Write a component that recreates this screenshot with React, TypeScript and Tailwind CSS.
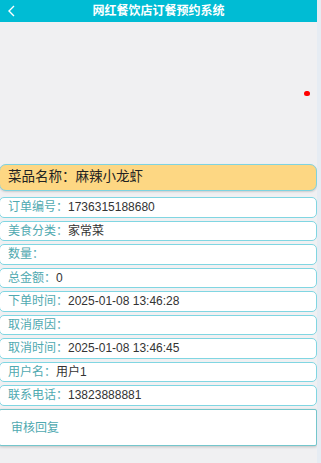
const font = { fontFamily: '"Liberation Sans", "Noto Sans CJK SC", sans-serif' };

type Row = { label: string; value: string };

const rows: Row[] = [
  { label: '订单编号：', value: '1736315188680' },
  { label: '美食分类：', value: '家常菜' },
  { label: '数量：', value: '' },
  { label: '总金额：', value: '0' },
  { label: '下单时间：', value: '2025-01-08 13:46:28' },
  { label: '取消原因：', value: '' },
  { label: '取消时间：', value: '2025-01-08 13:46:45' },
  { label: '用户名：', value: '用户1' },
  { label: '联系电话：', value: '13823888881' },
];

export default function App() {
  return (
    <div className="flex h-[463px] w-[321px] overflow-hidden bg-[#f0f0f2]" style={font}>
      <div className="flex w-[317px] flex-col">
        <div className="relative flex h-[22px] items-center justify-center bg-[#00bcd4]">
          <svg className="absolute left-[7px] top-[5px]" width="9" height="12" viewBox="0 0 9 12">
            <path d="M7 1 L2 6 L7 11" fill="none" stroke="#fff" strokeWidth="1.4" />
          </svg>
          <span className="text-[12px] font-bold text-white">网红餐饮店订餐预约系统</span>
        </div>

        <div className="relative h-[142px]">
          <div className="absolute left-[304px] top-[69px] h-[5px] w-[6px] rounded-full bg-[#ff0000]" />
        </div>

        <div className="-ml-[1px] flex h-[27px] items-center rounded-[7px] border border-[#7fd3e0] bg-[#fdd783] pl-[8px] text-[13.5px] text-[#222] shadow-[0_1px_2px_rgba(0,0,0,0.15)]">
          菜品名称：麻辣小龙虾
        </div>

        <div className="mt-[6px] flex flex-col gap-[3px]">
          {rows.map((r) => (
            <div
              key={r.label}
              className="-ml-[1px] flex h-[20.5px] items-center rounded-[5px] border border-[#80d6e2] bg-white pl-[8px] text-[12px]"
            >
              <span className="text-[#4fa9b0]">{r.label}</span>
              <span className="text-[#333]">{r.value}</span>
            </div>
          ))}
        </div>

        <div className="-ml-[1px] mt-[3.5px] flex h-[37px] items-center rounded-[2px] border border-[#74c6cc] bg-white pl-[11px] text-[12px] text-[#4fa9b0] shadow-[0_1px_3px_rgba(0,0,0,0.2)]">
          审核回复
        </div>
      </div>
      <div className="w-[4px] bg-[#e6ecf3]" />
    </div>
  );
}
